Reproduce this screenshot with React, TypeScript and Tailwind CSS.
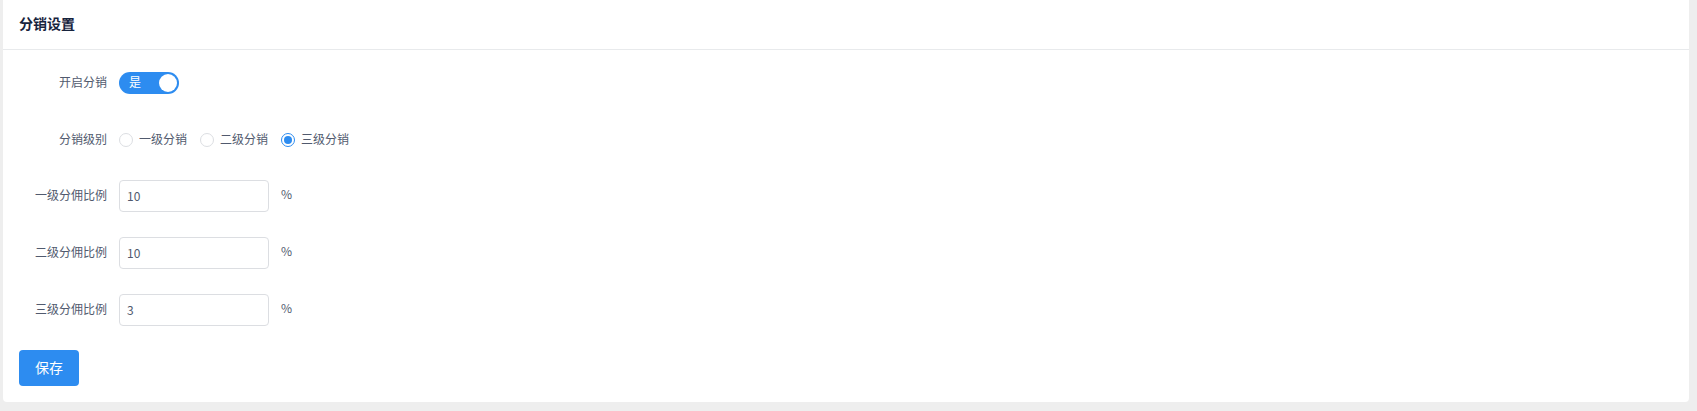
import React, { useState } from "react";

const font = "font-['Noto_Sans_CJK_SC','Noto_Sans',sans-serif]";

function FormRow({ label, children, className = "" }: { label: string; children: React.ReactNode; className?: string }) {
  return (
    <div className={`flex items-center h-8 ${className}`}>
      <label className="w-[100px] pr-3 text-right text-xs text-[#515a6e] relative -top-px">{label}</label>
      <div className="flex items-center">{children}</div>
    </div>
  );
}

function Radio({ checked, label, onClick }: { checked: boolean; label: string; onClick: () => void }) {
  return (
    <span className="flex items-center mr-[13px] cursor-pointer" onClick={onClick}>
      <span
        className={`w-[14px] h-[14px] rounded-full border bg-white flex items-center justify-center ${
          checked ? "border-[#2d8cf0]" : "border-[#dcdee2]"
        }`}
      >
        {checked && <span className="w-2 h-2 rounded-full bg-[#2d8cf0]" />}
      </span>
      <span className="ml-[6px] text-xs text-[#515a6e] relative -top-px">{label}</span>
    </span>
  );
}

export default function App() {
  const [level, setLevel] = useState(3);
  const rates = [
    { label: "一级分佣比例", value: "10" },
    { label: "二级分佣比例", value: "10" },
    { label: "三级分佣比例", value: "3" },
  ];

  return (
    <div className={`bg-[#eeeeee] w-full h-[411px] pl-[3px] pr-[8px] ${font}`}>
      <div className="bg-white rounded-b h-[402px]">
        {/* header */}
        <div className="h-[50px] border-b border-[#e8eaec] flex items-center px-4">
          <h2 className="text-sm font-bold text-[#17233d] relative -top-[2px]">分销设置</h2>
        </div>

        {/* form */}
        <div className="px-4 pt-[17px]">
          <FormRow label="开启分销" className="mb-[25px]">
            <span className="relative w-[60px] h-[22px] rounded-full bg-[#2d8cf0] flex items-center">
              <span className="ml-[10px] text-xs text-white relative -top-px">是</span>
              <span className="absolute right-[2px] top-[2px] w-[18px] h-[18px] rounded-full bg-white" />
            </span>
          </FormRow>

          <FormRow label="分销级别" className="mb-[24px]">
            <Radio checked={level === 1} label="一级分销" onClick={() => setLevel(1)} />
            <Radio checked={level === 2} label="二级分销" onClick={() => setLevel(2)} />
            <Radio checked={level === 3} label="三级分销" onClick={() => setLevel(3)} />
          </FormRow>

          {rates.map((r, i) => (
            <FormRow key={r.label} label={r.label} className={i === 2 ? "mb-6" : "mb-[25px]"}>
              <input
                defaultValue={r.value}
                className="w-[150px] h-8 border border-[#dcdee2] rounded px-[7px] pb-[2px] text-xs text-[#515a6e] outline-none"
              />
              <span className="ml-3 text-xs text-[#515a6e] relative -top-[2px]">%</span>
            </FormRow>
          ))}

          <button className="w-[60px] h-9 rounded bg-[#2d8cf0] text-white text-sm pb-[3px]">保存</button>
        </div>
      </div>
    </div>
  );
}
